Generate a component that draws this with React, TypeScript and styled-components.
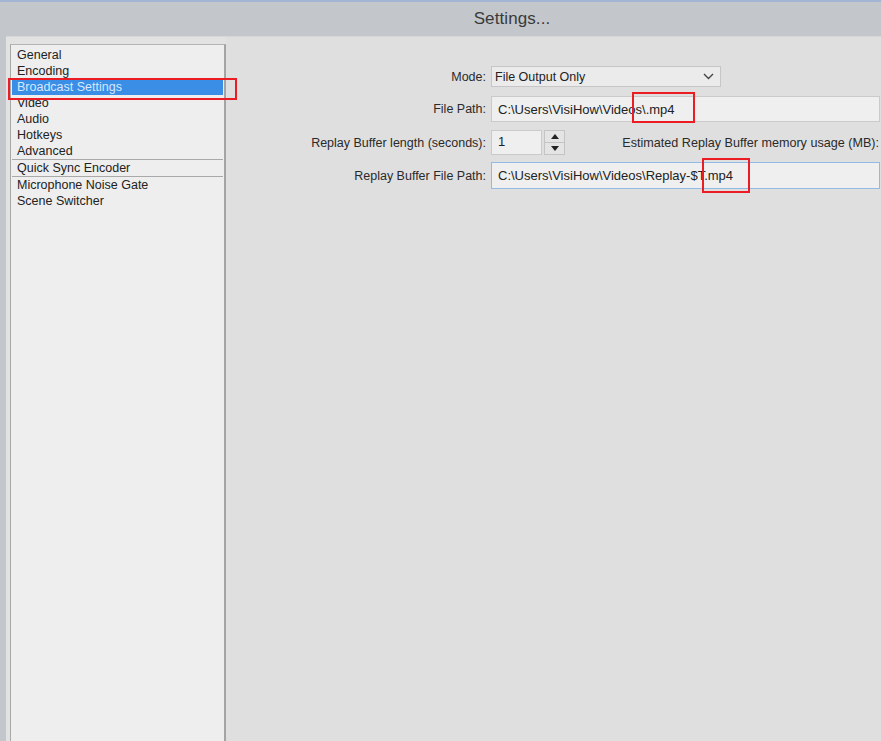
import React from "react";
import styled, { createGlobalStyle } from "styled-components";

const Global = createGlobalStyle`
  html, body { margin: 0; padding: 0; background: #c3c7cc; }
  body { font-family: "Liberation Sans", Arial, sans-serif; }
  * { box-sizing: border-box; }
`;

const Window = styled.div`
  position: relative;
  width: 881px;
  height: 741px;
  overflow: hidden;
  background: #c3c7cc;
  border-top: 2px solid #a4b4d4;
  display: flex;
  flex-direction: column;
`;

const TitleBar = styled.div`
  height: 34px;
  flex: none;
  display: flex;
  align-items: center;
  justify-content: center;
  padding-left: 143px;
  font-size: 17px;
  color: #3a3a3a;
  letter-spacing: 0.1px;
`;

const Body = styled.div`
  flex: 1;
  margin-left: 6px;
  display: flex;
  background: #e2e2e2;
  border-top: 1px solid #d6d6d6;
  min-height: 0;
`;

const Sidebar = styled.div`
  width: 216px;
  flex: none;
  margin: 7px 0 0 4px;
  padding-top: 2px;
  background: #eeeeee;
  border-left: 1px solid #a8a8a8;
  border-top: 1px solid #b4b4b4;
  border-right: 2px solid #a4a4a4;
  display: flex;
  flex-direction: column;
`;

const Item = styled.div<{ $active?: boolean }>`
  height: 16px;
  line-height: 16px;
  margin: 0 1px 0 1px;
  padding-left: 5px;
  font-size: 12.5px;
  color: ${(p) => (p.$active ? "#d6e8ff" : "#222")};
  background: ${(p) => (p.$active ? "#3a8ee6" : "transparent")};
  white-space: nowrap;
`;

const Divider = styled.div`
  height: 1px;
  margin: 0 1px 0 1px;
  background: #a9a9a9;
`;

const Main = styled.div`
  flex: 1;
  background: #dfdfdf;
  padding-top: 29px;
  display: flex;
  flex-direction: column;
  min-width: 0;
`;

const Form = styled.div`
  display: grid;
  grid-template-columns: 260px 389px;
  column-gap: 5px;
  align-items: center;
`;

const Label = styled.div<{ $top?: number }>`
  text-align: right;
  font-size: 12.5px;
  color: #2a2a2a;
  white-space: nowrap;
  margin-top: ${(p) => p.$top ?? 0}px;
`;

const Field = styled.div<{ $top?: number }>`
  margin-top: ${(p) => p.$top ?? 0}px;
  display: flex;
  align-items: center;
`;

const Select = styled.div`
  width: 230px;
  height: 21px;
  background: #ebebeb;
  border: 1px solid #c6c6c6;
  display: flex;
  align-items: center;
  justify-content: space-between;
  padding: 0 6px 0 3px;
  font-size: 12.5px;
  color: #222;
`;

const TextBox = styled.div<{ $focus?: boolean; $h?: number }>`
  width: 389px;
  height: ${(p) => p.$h ?? 26}px;
  background: #efefef;
  border: 1px solid ${(p) => (p.$focus ? "#8fbbe6" : "#cacaca")};
  display: flex;
  align-items: center;
  padding-left: 6px;
  font-size: 13px;
  color: #222;
  white-space: nowrap;
`;

const Spin = styled.div`
  display: flex;
  align-items: stretch;
  height: 25px;
  gap: 2px;
`;

const SpinValue = styled.div`
  width: 51px;
  background: #efefef;
  border: 1px solid #cacaca;
  font-size: 13px;
  padding: 3px 0 0 6px;
  color: #222;
`;

const SpinButtons = styled.div`
  width: 21px;
  display: flex;
  flex-direction: column;
  border: 1px solid #c4c4c4;
  background: #e4e4e4;
`;

const SpinBtn = styled.div`
  flex: 1;
  display: flex;
  align-items: center;
  justify-content: center;
  & + & { border-top: 1px solid #c4c4c4; }
`;

const Estimate = styled.div`
  flex: 1;
  text-align: right;
  font-size: 12.6px;
  color: #2a2a2a;
  white-space: nowrap;
  padding-right: 1px;
`;

const Footer = styled.div`
  margin-top: auto;
  margin-bottom: -14px;
  padding-left: 20px;
  font-size: 12.5px;
  color: #a4a4a4;
  height: 16px;
  white-space: nowrap;
`;

const RedBox = styled.div<{ $x: number; $y: number; $w: number; $h: number }>`
  position: absolute;
  left: ${(p) => p.$x}px;
  top: ${(p) => p.$y}px;
  width: ${(p) => p.$w}px;
  height: ${(p) => p.$h}px;
  border: 2.5px solid #ec1c24;
  pointer-events: none;
`;

const Chevron = () => (
  <svg width="11" height="7" viewBox="0 0 11 7">
    <path d="M1 1 L5.5 5.5 L10 1" fill="none" stroke="#444" strokeWidth="1.4" />
  </svg>
);

const Tri = ({ up }: { up?: boolean }) => (
  <svg width="8" height="5" viewBox="0 0 8 5">
    <path d={up ? "M0 5 L4 0 L8 5 Z" : "M0 0 L8 0 L4 5 Z"} fill="#222" />
  </svg>
);

export default function App() {
  return (
    <>
      <Global />
      <Window>
        <TitleBar>Settings...</TitleBar>
        <Body>
          <Sidebar>
            <Item>General</Item>
            <Item>Encoding</Item>
            <Item $active>Broadcast Settings</Item>
            <Item>Video</Item>
            <Item>Audio</Item>
            <Item>Hotkeys</Item>
            <Item>Advanced</Item>
            <Divider />
            <Item>Quick Sync Encoder</Item>
            <Divider />
            <Item>Microphone Noise Gate</Item>
            <Item>Scene Switcher</Item>
          </Sidebar>
          <Main>
            <Form>
              <Label>Mode:</Label>
              <Field>
                <Select>
                  <span>File Output Only</span>
                  <Chevron />
                </Select>
              </Field>
              <Label $top={9}>File Path:</Label>
              <Field $top={9}>
                <TextBox>C:\Users\VisiHow\Videos\.mp4</TextBox>
              </Field>
              <Label $top={8}>Replay Buffer length (seconds):</Label>
              <Field $top={8}>
                <Spin>
                  <SpinValue>1</SpinValue>
                  <SpinButtons>
                    <SpinBtn><Tri up /></SpinBtn>
                    <SpinBtn><Tri /></SpinBtn>
                  </SpinButtons>
                </Spin>
                <Estimate>Estimated Replay Buffer memory usage (MB):</Estimate>
              </Field>
              <Label $top={7}>Replay Buffer File Path:</Label>
              <Field $top={7}>
                <TextBox $focus $h={27}>C:\Users\VisiHow\Videos\Replay-$T.mp4</TextBox>
              </Field>
            </Form>
            <Footer>Note: Replay Buffer will be saved when the hotkey is pressed while streaming.</Footer>
          </Main>
        </Body>
        <RedBox $x={8} $y={76} $w={229} $h={22} />
        <RedBox $x={632} $y={90} $w={63} $h={31} />
        <RedBox $x={702} $y={156} $w={48} $h={35} />
      </Window>
    </>
  );
}
